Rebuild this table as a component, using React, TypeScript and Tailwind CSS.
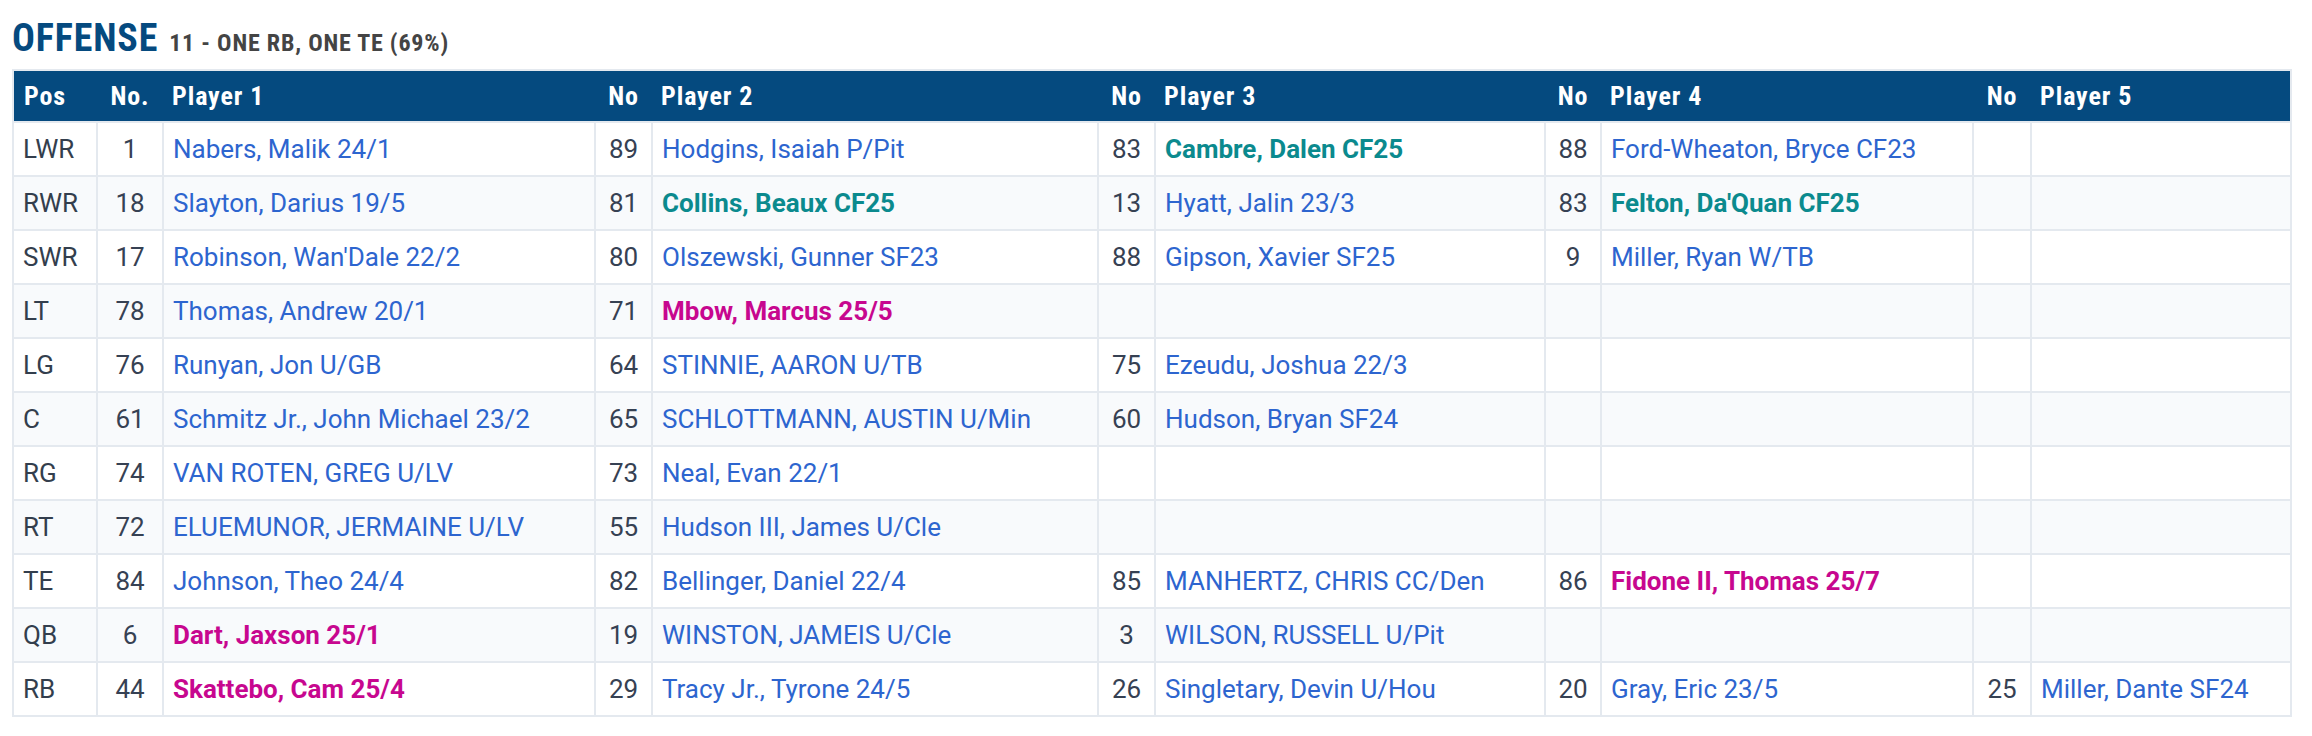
import React from "react";

type Kind = "b" | "t" | "m";
type Cell = { n: string; name: string; k?: Kind } | null;
type Row = { pos: string; players: Cell[] };

const rows: Row[] = [
  { pos: "LWR", players: [
    { n: "1", name: "Nabers, Malik 24/1" },
    { n: "89", name: "Hodgins, Isaiah P/Pit" },
    { n: "83", name: "Cambre, Dalen CF25", k: "t" },
    { n: "88", name: "Ford-Wheaton, Bryce CF23" },
    null,
  ] },
  { pos: "RWR", players: [
    { n: "18", name: "Slayton, Darius 19/5" },
    { n: "81", name: "Collins, Beaux CF25", k: "t" },
    { n: "13", name: "Hyatt, Jalin 23/3" },
    { n: "83", name: "Felton, Da'Quan CF25", k: "t" },
    null,
  ] },
  { pos: "SWR", players: [
    { n: "17", name: "Robinson, Wan'Dale 22/2" },
    { n: "80", name: "Olszewski, Gunner SF23" },
    { n: "88", name: "Gipson, Xavier SF25" },
    { n: "9", name: "Miller, Ryan W/TB" },
    null,
  ] },
  { pos: "LT", players: [
    { n: "78", name: "Thomas, Andrew 20/1" },
    { n: "71", name: "Mbow, Marcus 25/5", k: "m" },
    null, null, null,
  ] },
  { pos: "LG", players: [
    { n: "76", name: "Runyan, Jon U/GB" },
    { n: "64", name: "STINNIE, AARON U/TB" },
    { n: "75", name: "Ezeudu, Joshua 22/3" },
    null, null,
  ] },
  { pos: "C", players: [
    { n: "61", name: "Schmitz Jr., John Michael 23/2" },
    { n: "65", name: "SCHLOTTMANN, AUSTIN U/Min" },
    { n: "60", name: "Hudson, Bryan SF24" },
    null, null,
  ] },
  { pos: "RG", players: [
    { n: "74", name: "VAN ROTEN, GREG U/LV" },
    { n: "73", name: "Neal, Evan 22/1" },
    null, null, null,
  ] },
  { pos: "RT", players: [
    { n: "72", name: "ELUEMUNOR, JERMAINE U/LV" },
    { n: "55", name: "Hudson III, James U/Cle" },
    null, null, null,
  ] },
  { pos: "TE", players: [
    { n: "84", name: "Johnson, Theo 24/4" },
    { n: "82", name: "Bellinger, Daniel 22/4" },
    { n: "85", name: "MANHERTZ, CHRIS CC/Den" },
    { n: "86", name: "Fidone II, Thomas 25/7", k: "m" },
    null,
  ] },
  { pos: "QB", players: [
    { n: "6", name: "Dart, Jaxson 25/1", k: "m" },
    { n: "19", name: "WINSTON, JAMEIS U/Cle" },
    { n: "3", name: "WILSON, RUSSELL U/Pit" },
    null, null,
  ] },
  { pos: "RB", players: [
    { n: "44", name: "Skattebo, Cam 25/4", k: "m" },
    { n: "29", name: "Tracy Jr., Tyrone 24/5" },
    { n: "26", name: "Singletary, Devin U/Hou" },
    { n: "20", name: "Gray, Eric 23/5" },
    { n: "25", name: "Miller, Dante SF24" },
  ] },
];

const widths = [84, 66, 432, 57, 446, 57, 390, 56, 372, 58, 260];

const nameClass = (k?: Kind) => {
  if (k === "t") return "text-[#0b8a8e] font-bold";
  if (k === "m") return "text-[#c7078f] font-bold";
  return "text-[#2d65cf]";
};

const fam = "[font-family:'Roboto_Condensed',Roboto,'Liberation_Sans',sans-serif] font-stretch-condensed";
const th = `${fam} font-bold text-[26px] tracking-[0.9px]`;

export default function App() {
  return (
    <div className="min-h-screen bg-white [font-family:Roboto,'Liberation_Sans',sans-serif]">
      <div className="pl-[12px] pt-[19px]">
        <div className="flex items-baseline gap-[11px] h-[50px]">
          <span className={`${fam} font-bold text-[38px] tracking-[0.85px] leading-none text-[#054a7f]`}>OFFENSE</span>
          <span className={`${fam} font-bold text-[24px] tracking-[0.8px] leading-none text-[#444444]`}>11 - ONE RB, ONE TE (69%)</span>
        </div>
        <table className="table-fixed border-collapse border-2 border-[#e4e9ef] w-[2280px]">
          <colgroup>
            {widths.map((w, i) => (
              <col key={i} style={{ width: w }} />
            ))}
          </colgroup>
          <thead>
            <tr className="bg-[#054a7f] text-white h-[52px]">
              <th className={`${th} text-left pl-[10px]`}>Pos</th>
              <th className={`${th} text-center`}>No.</th>
              <th className={`${th} text-left pl-[9px]`}>Player 1</th>
              <th className={`${th} text-center`}>No</th>
              <th className={`${th} text-left pl-[9px]`}>Player 2</th>
              <th className={`${th} text-center`}>No</th>
              <th className={`${th} text-left pl-[9px]`}>Player 3</th>
              <th className={`${th} text-center`}>No</th>
              <th className={`${th} text-left pl-[9px]`}>Player 4</th>
              <th className={`${th} text-center`}>No</th>
              <th className={`${th} text-left pl-[9px]`}>Player 5</th>
            </tr>
          </thead>
          <tbody>
            {rows.map((r, i) => (
              <tr key={r.pos} className={i % 2 === 1 ? "bg-[#f8fafc]" : "bg-white"}>
                <td className="h-[54px] border-2 border-[#e4e9ef] pl-[9px] text-[26px] text-[#333e4d] whitespace-nowrap">{r.pos}</td>
                {r.players.map((p, j) => (
                  <React.Fragment key={j}>
                    <td className="h-[54px] border-2 border-[#e4e9ef] text-center text-[26px] text-[#364153] whitespace-nowrap">{p ? p.n : ""}</td>
                    <td className={`h-[54px] border-2 border-[#e4e9ef] pl-[9px] text-[26px] whitespace-nowrap ${p ? nameClass(p.k) : ""}`}>{p ? p.name : ""}</td>
                  </React.Fragment>
                ))}
              </tr>
            ))}
          </tbody>
        </table>
      </div>
    </div>
  );
}
